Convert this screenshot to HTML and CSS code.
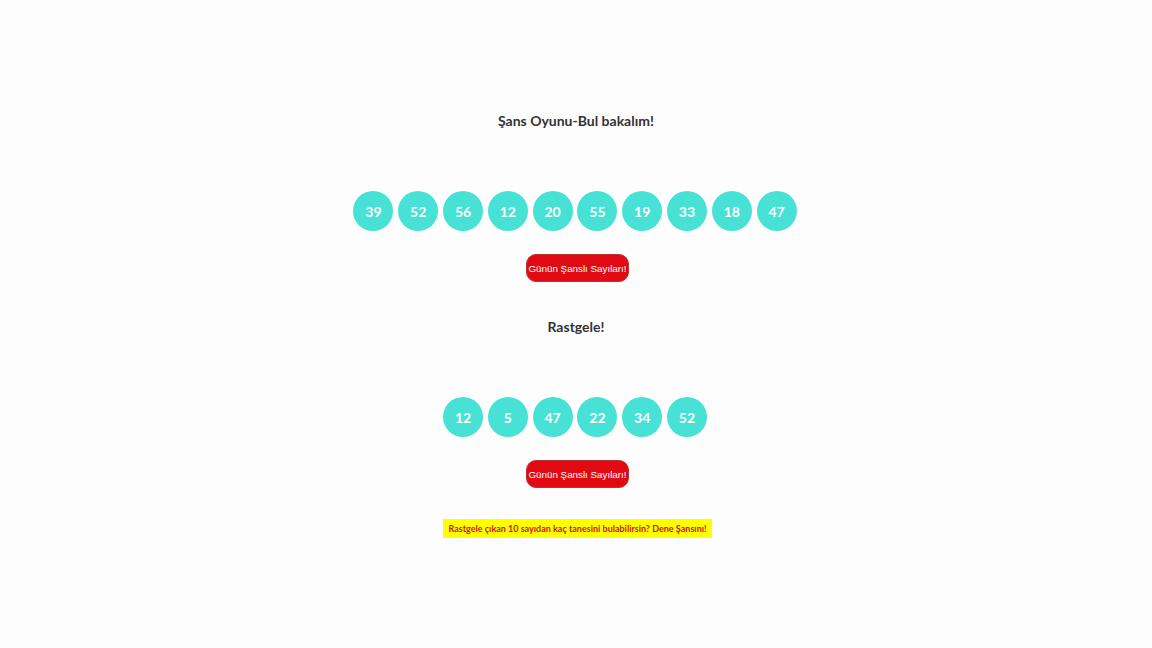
FILE: index.html
```html
<!DOCTYPE html>
<html lang="tr">
<head>
<meta charset="utf-8">
<title>Şans Oyunu</title>
<link rel="stylesheet" href="styles.css">
</head>
<body>
<main class="page">
  <section class="game">
    <h2 class="title">Şans Oyunu-Bul bakalım!</h2>
    <div class="balls">
      <span class="ball">39</span><span class="ball">52</span><span class="ball">56</span><span class="ball">12</span><span class="ball">20</span><span class="ball">55</span><span class="ball">19</span><span class="ball">33</span><span class="ball">18</span><span class="ball">47</span>
    </div>
    <button class="btn" type="button">Günün Şanslı Sayıları!</button>
  </section>
  <section class="game second">
    <h2 class="title">Rastgele!</h2>
    <div class="balls">
      <span class="ball">12</span><span class="ball">5</span><span class="ball">47</span><span class="ball">22</span><span class="ball">34</span><span class="ball">52</span>
    </div>
    <button class="btn" type="button">Günün Şanslı Sayıları!</button>
  </section>
  <p class="note">Rastgele çıkan 10 sayıdan kaç tanesini bulabilirsin? Dene Şansını!</p>
</main>
</body>
</html>
```
FILE: styles.css
```css
html, body {
  margin: 0;
  padding: 0;
  background: #fdfdfd;
}
body {
  font-family: Lato, "Open Sans", sans-serif;
  color: #333;
}
.page {
  display: flex;
  flex-direction: column;
  align-items: center;
  padding-top: 111px;
}
.game {
  display: flex;
  flex-direction: column;
  align-items: center;
}
.second {
  margin-top: 35px;
}
.title {
  margin: 0;
  font-size: 14px;
  line-height: 20px;
  font-weight: 700;
  color: #333;
}
.balls {
  display: flex;
  gap: 4.8px;
  margin-top: 60px;
  margin-right: 2px;
}
.ball {
  width: 40px;
  height: 40px;
  border-radius: 50%;
  background: #48e1d5;
  color: #fff;
  font-weight: 700;
  font-size: 14px;
  display: flex;
  align-items: center;
  justify-content: center;
}
.btn {
  margin-top: 23px;
  margin-left: 3px;
  width: 103px;
  height: 28px;
  padding: 0;
  border: 1px solid #b33;
  border-radius: 10px;
  background: #e20a12;
  color: #fff;
  font-family: "Liberation Sans", Arial, sans-serif;
  font-size: 9.8px;
}
.note {
  margin: 31px 0 0;
  margin-left: 3px;
  background: #ffff00;
  color: #d2102a;
  font-size: 9px;
  font-weight: 700;
  padding: 3px 5px;
  line-height: 13px;
}
```
